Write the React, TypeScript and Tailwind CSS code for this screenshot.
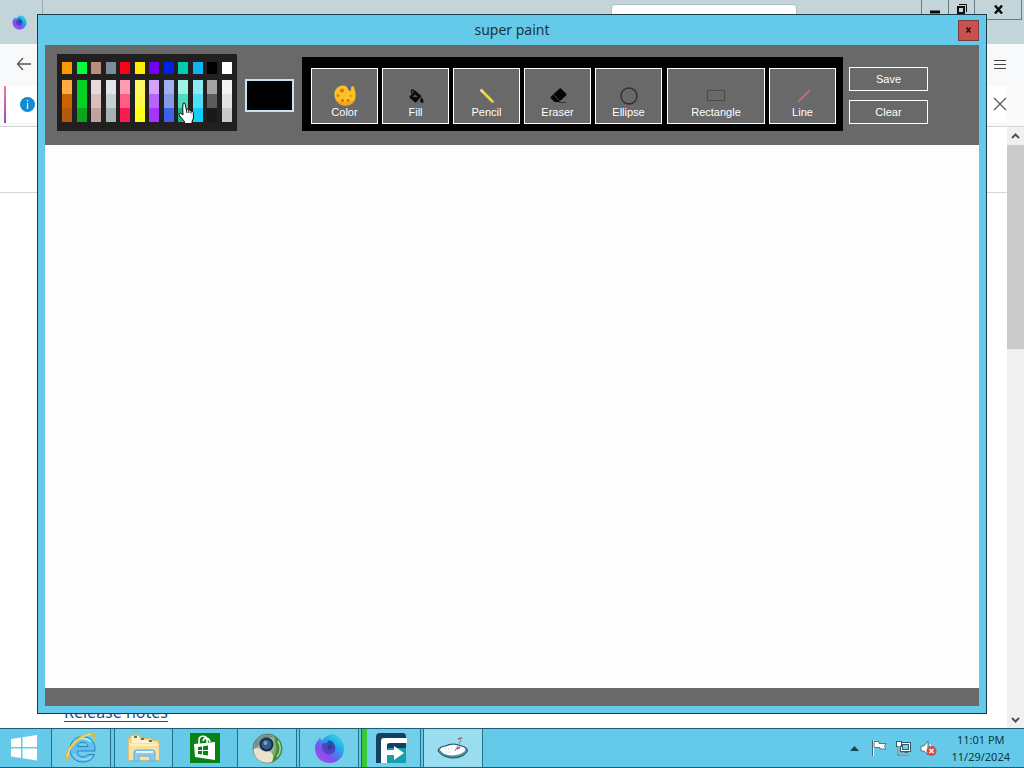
import React from "react";

type Swatch = { base: string; shades: [string, string, string] };

const swatches: Swatch[] = [
  { base: "#ff9800", shades: ["#ffad42", "#cc6200", "#b45a0c"] },
  { base: "#00ff3c", shades: ["#05d024", "#05d024", "#0aa61c"] },
  { base: "#bc8c7e", shades: ["#e6dcda", "#d8bfb9", "#c0a39c"] },
  { base: "#7b8d99", shades: ["#dfe5e8", "#c6cfd2", "#a6b1b3"] },
  { base: "#ff0016", shades: ["#ff9cb4", "#ff5c86", "#fa1c4c"] },
  { base: "#ffee00", shades: ["#fff766", "#fff94e", "#ffff14"] },
  { base: "#7400f4", shades: ["#d4a2fc", "#b564fc", "#a436fc"] },
  { base: "#0022e6", shades: ["#a2b0f0", "#8798e4", "#3f60ea"] },
  { base: "#00ccb0", shades: ["#9cf4e4", "#4edcc0", "#12b88c"] },
  { base: "#10b4f2", shades: ["#8eeaf2", "#50dff8", "#10cff8"] },
  { base: "#000000", shades: ["#a4a2a2", "#5c5a5a", "#1a1819"] },
  { base: "#ffffff", shades: ["#f3f3f3", "#e2e2e2", "#cacaca"] },
];

function Palette() {
  return (
    <div className="relative flex h-[77px] w-[180px] shrink-0 justify-between bg-[#211f20] px-[5px] pt-2">
      {swatches.map((s) => (
        <div key={s.base} className="flex w-2.5 flex-col">
          <button aria-label={s.base} className="h-3 w-full" style={{ background: s.base }} />
          <div className="mt-1.5 flex flex-col">
            {s.shades.map((c, i) => (
              <button key={i} aria-label={c} className="h-[14px] w-full" style={{ background: c }} />
            ))}
          </div>
        </div>
      ))}
      <svg className="pointer-events-none absolute top-12 left-[121px]" width="17" height="23" viewBox="0 0 17 23">
        <path
          d="M5 1.5Q6 .3 7 1.5L8.3 7.5Q9.5 6.5 10.7 8.2Q12 7.2 13 9Q14.5 8.5 15.3 10.5L15.5 16L14 19.5V21.5H6.5V19.5L3.5 16L1 13Q.6 11 2.7 11.3L5 13L4.7 7Z"
          fill="#fff"
          stroke="#111"
        />
        <path d="M8.3 7.5L9 11M10.7 8.2L11 11M13 9V11.5" stroke="#111" fill="none" />
      </svg>
    </div>
  );
}

const ColorIcon = () => (
  <svg width="24" height="24" viewBox="0 0 24 24">
    <path
      d="M9 1.5C4 2.500 1 6.500 1.500 11C2 17 7 21.500 12 21.500C18 21.500 22 18.500 22.500 13C22.800 9 22 5 20.500 2.500C19.500 1 17.500 3 18 5C18.500 7 16.500 7.500 15.500 6C14.500 4 14 1 9 1.500Z"
      fill="#fcc125"
    />
    <path d="M2 14C4 20 9 21.500 12 21.500C18 21.500 21.500 19 22.300 14C17 20 8 20 2 14Z" fill="#f6a31b" />
    <circle cx="9" cy="6.500" r="2" fill="#e8622a" />
    <circle cx="5" cy="11.500" r="1.500" fill="#dd8418" />
    <circle cx="9.500" cy="16.500" r="1.500" fill="#db6420" />
    <circle cx="15" cy="16.500" r="1.500" fill="#c8771a" />
    <circle cx="18" cy="12" r="1.400" fill="#f19b20" />
  </svg>
);

const FillIcon = () => (
  <svg width="24" height="24" viewBox="0 0 24 24">
    <path d="M11 6.500L17.500 12L12.500 18Q11.500 19 10.500 18L6 14Q5 13 6 12Z" fill="#0b0b0b" />
    <path d="M11 12.500Q7 9 7.500 6.500Q9 5 11.500 8.500" fill="none" stroke="#111" strokeWidth="1.400" />
    <path d="M8.500 13L11 10.500L14 13Z" fill="#555" />
    <path d="M17.500 13Q20 16.500 19.500 18Q18 20 16.500 18Q15.500 16.500 17.500 13Z" fill="#0b0b0b" />
  </svg>
);

const PencilIcon = () => (
  <svg width="24" height="24" viewBox="0 0 24 24">
    <path d="M6.500 6.500L17.500 17.500" stroke="#f0d93c" strokeWidth="2.600" />
    <path d="M5.500 5.500L7.500 7.500" stroke="#e3dca4" strokeWidth="2.600" />
    <path d="M17 17L18.500 18.500" stroke="#dcc071" strokeWidth="2.400" />
  </svg>
);

const EraserIcon = () => (
  <svg width="24" height="24" viewBox="0 0 24 24">
    <path d="M13.500 4.500Q14.500 4 15.500 5L20 9.500Q21 10.500 20 11.500L13 18H8.500L5 14.500Q4 13.500 5 12.500Z" fill="#050505" />
    <path d="M7.500 10.500L13.500 16.500" stroke="#5c5c5c" strokeWidth=".8" />
    <path d="M13 18.500H20" stroke="#333" />
  </svg>
);

const EllipseIcon = () => (
  <svg width="24" height="24" viewBox="0 0 24 24">
    <circle cx="12" cy="12" r="8" fill="none" stroke="#303030" strokeWidth="1.400" />
  </svg>
);

const RectangleIcon = () => (
  <svg width="24" height="24" viewBox="0 0 24 24">
    <rect x="3.500" y="6.500" width="17" height="10" fill="none" stroke="#4a4a4a" />
  </svg>
);

const LineIcon = () => (
  <svg width="24" height="24" viewBox="0 0 24 24">
    <path d="M7 18L19 6" stroke="#b3767d" strokeWidth="1.800" />
  </svg>
);

const tools = [
  { label: "Color", icon: <ColorIcon />, size: "w-[67px]" },
  { label: "Fill", icon: <FillIcon />, size: "w-[67px]" },
  { label: "Pencil", icon: <PencilIcon />, size: "w-[67px]" },
  { label: "Eraser", icon: <EraserIcon />, size: "w-[67px]" },
  { label: "Ellipse", icon: <EllipseIcon />, size: "w-[67px]" },
  { label: "Rectangle", icon: <RectangleIcon />, size: "ml-px w-[98px]" },
  { label: "Line", icon: <LineIcon />, size: "w-[67px]" },
];

function PaintWindow() {
  return (
    <section className="absolute inset-x-[37px] inset-y-[14px] flex flex-col border border-[#173c4c] bg-[#65cae9] px-[7px] pb-[7px]">
      <header className="grid h-[30px] shrink-0 grid-cols-[1fr_auto_1fr] items-center">
        <span />
        <h1 className="font-['Noto_Sans',sans-serif] text-sm text-[#173540]">super paint</h1>
        <button
          aria-label="Close"
          className="flex size-[21px] items-center justify-center justify-self-end border border-[#7c3b40] bg-[#c7524f]"
        >
          <svg width="5" height="6" viewBox="0 0 5 6">
            <path d="M.5 .5L4.500 5.500M4.500 .5L.5 5.500" stroke="#1c1010" strokeWidth="1.500" />
          </svg>
        </button>
      </header>
      <div className="flex h-[100px] shrink-0 items-end bg-[#696969] pb-[14px] pl-3 font-['Liberation_Sans',sans-serif] text-[11px] leading-4 text-white">
        <Palette />
        <button aria-label="Current color" className="mb-[19px] ml-2 h-[33px] w-[49px] shrink-0 border-2 border-[#c5e2f2] bg-black" />
        <div className="ml-2 flex h-[74px] shrink-0 gap-1 bg-black pt-[11px] pr-[7px] pl-[9px]">
          {tools.map((t) => (
            <button key={t.label} className={`flex h-14 flex-col items-center justify-end border border-white bg-[#696969] pb-[3px] ${t.size}`}>
              <span className="-mb-1">{t.icon}</span>
              <span className="relative">{t.label}</span>
            </button>
          ))}
        </div>
        <div className="mb-[7px] ml-1.5 flex shrink-0 flex-col gap-[9px]">
          <button className="h-6 w-[79px] border border-white">Save</button>
          <button className="h-6 w-[79px] border border-white">Clear</button>
        </div>
      </div>
      <main className="flex-1 bg-[#fefefe]" />
      <footer className="h-[18px] shrink-0 bg-[#696969]" />
    </section>
  );
}

function FirefoxIcon({ size, id }: { size: number; id: string }) {
  return (
    <svg width={size} height={size} viewBox="0 0 32 32">
      <defs>
        <linearGradient id={id} x1="1" y1="0" x2="0.200" y2="1">
          <stop offset="0" stopColor="#40ead8" />
          <stop offset=".4" stopColor="#23a7ee" />
          <stop offset=".7" stopColor="#7754ef" />
          <stop offset="1" stopColor="#b34be8" />
        </linearGradient>
      </defs>
      <path d="M4 8L6 5L8 8C11 4 16 1 20 1C27 3 31 9 31 16C31 25 24 31 16 31C7 31 1 24 1 16C1 13 2 10 4 8Z" fill={`url(#${id})`} />
      <circle cx="16" cy="16" r="6" fill="#2f3fa0" />
      <path d="M8 12C11 9 14 11 18 10.500C15 12.500 13 13 14 16C16 19 20 17 20 13C23 18 20 22 15 22C10 21 8 17 8 12Z" fill="#5544c0" />
      <path d="M14 8C18 7 22 10 21 15C19 12 16 13 13 12Z" fill="#2354af" />
    </svg>
  );
}

function Browser() {
  return (
    <section className="flex h-full flex-col bg-white">
      <div className="flex h-11 shrink-0 items-start bg-[#c3d5d9]">
        <div className="flex h-full w-[43px] items-center border-r border-[#9eafb3] pl-3">
          <FirefoxIcon size={15} id="ffTab" />
        </div>
        <div className="flex-1" />
        <div className="mt-1 h-10 w-[186px] rounded border border-[#b1bec1] bg-white" />
        <div className="w-[124px]" />
        <div className="mr-0.5 flex h-5 border border-t-0 border-[#627d84] text-black">
          <button aria-label="Minimize" className="flex w-[26px] items-center justify-center pt-1">
            <svg width="10" height="4"><path d="M0 2H10" stroke="#080808" strokeWidth="3" /></svg>
          </button>
          <button aria-label="Restore" className="flex w-[27px] items-center justify-center border-x border-[#627d84]">
            <svg width="11" height="11" viewBox="0 0 11 11">
              <path d="M3 .5H10.500V8" fill="none" stroke="#111" />
              <rect x="2" y="3" width="6" height="6" fill="none" stroke="#111" strokeWidth="2" />
            </svg>
          </button>
          <button aria-label="Close browser" className="flex w-[46px] items-center justify-center">
            <svg width="9" height="9"><path d="M1 .5L8 8.500M8 .5L1 8.500" stroke="#080808" strokeWidth="2.400" /></svg>
          </button>
        </div>
      </div>
      <div className="flex h-10 shrink-0 items-center justify-between bg-[#f8f9fb] pr-[18px] pl-4">
        <button aria-label="Back">
          <svg width="16" height="14"><path d="M15 7H1.500M7 1L1.500 7L7 13" stroke="#555" strokeWidth="1.300" fill="none" /></svg>
        </button>
        <button aria-label="Menu">
          <svg width="12" height="11"><path d="M0 1.500H12M0 5.500H12M0 9.500H12" stroke="#444" /></svg>
        </button>
      </div>
      <div className="flex h-[43px] shrink-0 items-start border-b border-[#d5d5d5] bg-[#f9f9f9] pt-0.5 pr-[17px] pl-1">
        <span className="h-[37px] w-0.5 bg-gradient-to-b from-[#f47b96] to-[#914db8]" />
        <div className="flex h-9 flex-1 items-center justify-between bg-white pl-3.5">
          <svg width="15" height="15"><circle cx="7.500" cy="7.500" r="7.500" fill="#118bd1" /><path d="M7.500 6V12M7.500 3V4.500" stroke="#dff4ff" strokeWidth="1.300" /></svg>
          <button aria-label="Dismiss notification">
            <svg width="14" height="14"><path d="M1 1L13 13M13 1L1 13" stroke="#555" strokeWidth="1.200" /></svg>
          </button>
        </div>
      </div>
      <div className="flex min-h-0 flex-1">
        <div className="flex flex-1 flex-col justify-between">
          <div className="h-[66px] border-b border-[#d4d5d7]" />
          <a href="#release-notes" className="mb-1 ml-16 self-start font-['Noto_Sans',sans-serif] text-base leading-6 text-[#164d98] underline underline-offset-3">
            Release notes
          </a>
        </div>
        <div className="flex w-[17px] flex-col bg-[#f0f0f0]">
          <button aria-label="Scroll up" className="flex h-[18px] items-center justify-center">
            <svg width="9" height="6"><path d="M1 5L4.500 1.500L8 5" stroke="#555" strokeWidth="2" fill="none" /></svg>
          </button>
          <div className="h-[204px] bg-[#cbcbcb]" />
          <div className="flex-1" />
          <button aria-label="Scroll down" className="flex h-[17px] items-center justify-center">
            <svg width="9" height="6"><path d="M1 1L4.500 4.500L8 1" stroke="#555" strokeWidth="2" fill="none" /></svg>
          </button>
        </div>
      </div>
    </section>
  );
}

const StartIcon = () => (
  <svg width="28" height="26" viewBox="0 0 28 26">
    <path d="M1 4L11 2.500V12H1ZM12.500 2.300L27 0V12H12.500ZM1 13.500H11V23L1 21.500ZM12.500 13.500H27V25.500L12.500 23.300Z" fill="#fff" />
  </svg>
);

const ExplorerBrowserIcon = () => (
  <svg width="34" height="32" viewBox="0 0 34 32">
    <path
      d="M31 19C32 10 26 4.500 18.500 4.500C11 4.500 6 10 6 17.500C6 25.500 12 30 19 30C25 30 29 27 30.500 22.500H23.500C21 26.500 13.500 25.500 13.500 19ZM13.500 14.500C14.500 9 23 9 24 14.500Z"
      fill="#5fc0ee"
      stroke="#2b83ba"
    />
    <path d="M8.500 14C10 7 20 4 27 9.500" fill="none" stroke="#b9ebfb" strokeWidth="1.800" />
    <path d="M10 22C12 27.500 22 30 27.500 24.500" fill="none" stroke="#94dbf7" strokeWidth="1.500" />
    <path d="M4 28C-1 20 15 2 28 2C31.500 2 31.500 5 30 8" fill="none" stroke="#e3bb35" strokeWidth="2.600" />
    <path d="M3.500 25C4 15 17 3 27 2" fill="none" stroke="#f7e98a" />
  </svg>
);

const FolderIcon = () => (
  <svg width="34" height="30" viewBox="0 0 34 30">
    <path d="M1 27V5H3V2H12L14 5H24L26 7H32V27Z" fill="#efd591" stroke="#d1b164" />
    <path d="M5 3H12L13 7H21V9H29V22H4Z" fill="#fff4ca" />
    <path d="M7 4H10M14 6H17M22 8H25" stroke="#707443" strokeWidth="2" />
    <path d="M2 10H32V27H2Z" fill="#f8dfa2" />
    <path d="M3 12H31" stroke="#fcecc0" strokeWidth="2" />
    <path d="M7 27V19Q7 17 10 17H25Q28 17 28 20V28H23V23H12V28H7Z" fill="#8bcaec" stroke="#65afd7" />
    <path d="M9 19H26" stroke="#e2f5fd" strokeWidth="2" />
  </svg>
);

const StoreIcon = () => (
  <svg width="30" height="30" viewBox="0 0 30 30">
    <rect width="30" height="30" fill="#098314" />
    <path d="M4 11L25 9V27L5 24Z" fill="#fff" />
    <path d="M9 11V7C9 2 17 2 17 7V11M13 8C14 4 19 4 20 9" fill="none" stroke="#fff" strokeWidth="1.600" />
    <path d="M8 14L12 13.500V17H8ZM13 13.300L18 12.500V17H13ZM8 18H12V21.500L8 21ZM13 18H18V22.500L13 21.700Z" fill="#098314" />
  </svg>
);

const GlobeIcon = () => (
  <svg width="31" height="31" viewBox="0 0 31 31">
    <circle cx="15.500" cy="15.500" r="14.500" fill="#a4b3a7" stroke="#5d7370" />
    <path d="M3 9C8 2 17 0 23 4C18 5 13 4 9 9L2 18Z" fill="#73918f" />
    <path d="M22 3C31 7 32 17 27 24C24 28 20 29 17 30C23 22 25 13 22 3Z" fill="#3f8f35" />
    <path d="M18 21C23 18 24 11 20 5C26 9 26 20 20 26Z" fill="#81ad6c" />
    <path d="M26 8C29 13 29 19 25 24" stroke="#a9d59a" strokeWidth="1.500" fill="none" />
    <path d="M1.500 17C5 12 9 18 14 18C20 18 23 22 20 29C11 32 2 26 1.500 17Z" fill="#e9e3cb" />
    <circle cx="14.500" cy="11.500" r="7" fill="#152e48" />
    <circle cx="14.500" cy="11.500" r="5" fill="#315b8a" />
    <circle cx="13.500" cy="10" r="2" fill="#7e9fc1" />
  </svg>
);

const FIcon = () => (
  <svg width="31" height="32" viewBox="0 0 31 32">
    <path d="M4 1H27Q30 1 30 5V31H0V5Q0 1 4 1Z" fill="#124063" />
    <path d="M12 16H30V31H9Z" fill="#16a0ae" />
    <path d="M5 31V9Q5 6 8 6H31V11H14Q11 11 11 13V18H18V14L28 21L18 28V23H11V31Z" fill="#fff" />
  </svg>
);

const PaintIcon = () => (
  <svg width="32" height="24" viewBox="0 0 32 24">
    <path d="M1 15Q1 11 8 10Q16 6 25 10Q32 12 30 16Q26 22 15 22Q5 21 1 15Z" fill="#4b8fa9" stroke="#284f5b" />
    <path d="M3 14Q3 11 9 10.500Q17 7 24 10.500Q30 12 28 15Q24 19 15 19.500Q6 19 3 14Z" fill="#fff" />
    <path d="M18 15L24 4" stroke="#6d8d9a" />
    <path d="M21 3L25 2M20 13L23 11" stroke="#b84d65" strokeWidth="1.600" />
    <path d="M8 13H12M9 16H14M14 12H17" stroke="#9bc9d8" strokeDasharray="1 2" />
  </svg>
);

const apps = [
  { label: "Start", icon: <StartIcon />, style: "w-[52px] pr-1 bg-[#65cae9]" },
  { label: "Internet Explorer", icon: <ExplorerBrowserIcon />, style: "w-[59px] bg-[#72cfea]" },
  { label: "File Explorer", icon: <FolderIcon />, style: "ml-[3px] w-[59px] border-l bg-[#72cfea]" },
  { label: "Store", icon: <StoreIcon />, style: "w-[65px] bg-[#65cae9]" },
  { label: "Screen recorder", icon: <GlobeIcon />, style: "w-[59px] bg-[#72cfea]" },
  { label: "Firefox", icon: <FirefoxIcon size={31} id="ffTask" />, style: "ml-0.5 w-[60px] border-l bg-[#72cfea]" },
  { label: "File transfer", icon: <FIcon />, style: "ml-0.5 w-[60px] border-l border-l-[#27683a] bg-linear-[90deg,#3dc738_5px,#72cfea_5px]" },
  { label: "super paint", icon: <PaintIcon />, style: "ml-0.5 w-[60px] border-l bg-[#9bddf0]" },
];

function Taskbar() {
  return (
    <footer className="flex h-10 shrink-0 border-y border-[#1f5b72] bg-[#65cae9] font-['Noto_Sans',sans-serif] text-[11px] text-[#123440]">
      {apps.map((a) => (
        <button key={a.label} aria-label={a.label} className={`flex shrink-0 items-center justify-center border-r border-[#256f8a] ${a.style}`}>
          {a.icon}
        </button>
      ))}
      <div className="ml-auto flex items-center pr-[14px]">
        <button aria-label="Show hidden icons" className="mr-3">
          <svg width="9" height="5"><path d="M0 5L4.500 0L9 5Z" fill="#174257" /></svg>
        </button>
        <button aria-label="Action Center" className="mr-2">
          <svg width="16" height="18" viewBox="0 0 16 18">
            <path d="M1.500 1V17" stroke="#476774" />
            <path d="M2.500 1V17" stroke="#fff" />
            <path d="M3 2.500H8V4.500H15L13.500 7L15 10H9V8.500H3Z" fill="#fff" stroke="#547986" />
          </svg>
        </button>
        <button aria-label="Network" className="mr-2">
          <svg width="17" height="17" viewBox="0 0 17 17">
            <rect x="5.500" y="2.500" width="10" height="9" fill="#fff" stroke="#315c6d" />
            <rect x="7.500" y="4.500" width="6" height="5" fill="#72cfea" stroke="#315c6d" />
            <rect x="1.500" y="1.500" width="5" height="5" fill="#fff" stroke="#315c6d" />
            <path d="M4 7V14H14M11 12V14" fill="none" stroke="#315c6d" strokeWidth="2.500" />
            <path d="M4 6V14H14" fill="none" stroke="#fff" />
          </svg>
        </button>
        <button aria-label="Volume muted" className="mr-3.5">
          <svg width="17" height="17" viewBox="0 0 17 17">
            <path d="M1 6H4L8 1V15L4 11H1Z" fill="#fff" stroke="#567884" />
            <path d="M10 4Q13 8 10 13" fill="none" stroke="#fff" />
            <circle cx="11.500" cy="11" r="5" fill="#d84a40" />
            <path d="M9.500 9L13.500 13M13.500 9L9.500 13" stroke="#fff" strokeWidth="1.500" />
          </svg>
        </button>
        <time className="text-center leading-[17px]">
          11:01 PM
          <br />
          11/29/2024
        </time>
      </div>
    </footer>
  );
}

export default function App() {
  return (
    <div className="flex h-screen flex-col overflow-hidden">
      <div className="relative min-h-0 flex-1">
        <Browser />
        <PaintWindow />
      </div>
      <Taskbar />
    </div>
  );
}
